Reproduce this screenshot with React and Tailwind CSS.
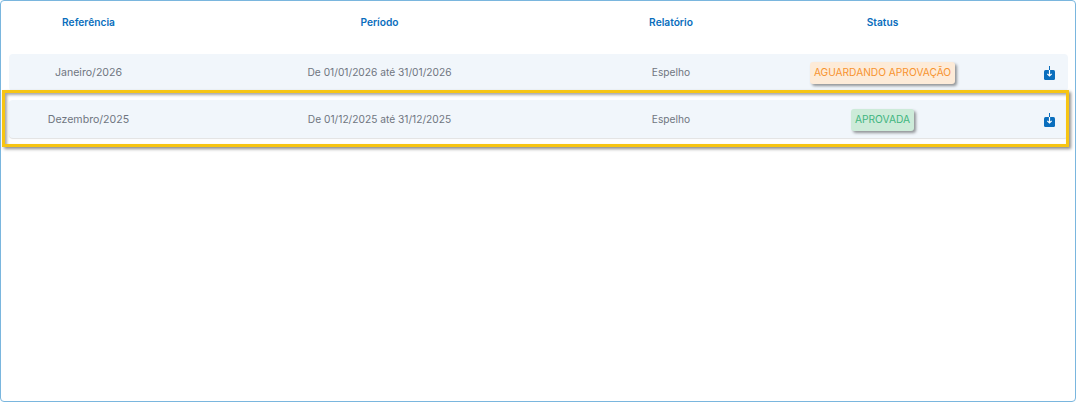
function DownloadIcon() {
  return (
    <svg width="11" height="14" viewBox="0 0 11 14" className="block">
      <rect x="0" y="4" width="11" height="10" rx="1.5" fill="#0a6ebd" />
      <path d="M5.5 0V4" fill="none" stroke="#0a6ebd" strokeWidth="1" />
      <path d="M5.5 4V10M3.3 7.8L5.5 10L7.7 7.8" fill="none" stroke="#fff" strokeWidth="1.2" />
    </svg>
  );
}

function Cells({ ref_, periodo, status, badge, shift }) {
  return (
    <div className={`grid grid-cols-[159px_423px_160px_263px_54px] items-center h-full text-[10.2px] text-[#6f7580] ${shift}`}>
      <div className="text-center text-[10.6px]">{ref_}</div>
      <div className="text-center">{periodo}</div>
      <div className="text-center">Espelho</div>
      <div className="flex justify-center">
        <span className={`rounded-[3px] px-[4px] h-[22px] flex items-center text-[10.2px] shadow-[2px_2px_3px_rgba(0,0,0,0.4)] ${badge}`}>{status}</span>
      </div>
      <div className="flex justify-end pr-[13px]"><DownloadIcon /></div>
    </div>
  );
}

export default function App() {
  return (
    <div className="w-[1076px] h-[402px] bg-white border border-[#7ab6de] rounded-[4px] overflow-hidden font-['Inter',sans-serif]">
      <div className="grid grid-cols-[159px_423px_160px_263px_54px] ml-[8px] mr-[7px] h-[53px] pb-[9px] items-center text-[10.2px] font-semibold text-[#0a6ebd] text-center">
        <div>Referência</div>
        <div>Período</div>
        <div>Relatório</div>
        <div>Status</div>
        <div />
      </div>
      <div className="ml-[8px] mr-[7px] flex flex-col gap-[9px]">
        <div className="h-[37px] bg-[#f1f6fb] rounded-[4px]">
          <Cells ref_="Janeiro/2026" periodo="De 01/01/2026 até 31/01/2026" status="AGUARDANDO APROVAÇÃO" badge="bg-[#fdebd8] text-[#f7932f]" />
        </div>
        <div className="relative h-[38px] bg-[#f1f6fb] rounded-[4px] shadow-[0_1px_1px_rgba(0,0,0,0.12)]">
          <Cells ref_="Dezembro/2025" periodo="De 01/12/2025 até 31/12/2025" status="APROVADA" badge="bg-[#cdebd9] text-[#3fb57f]" shift="pt-[1px]" />
          <div className="absolute left-[-7px] right-[-1px] top-[-10px] bottom-[-9px] border-[3px] border-[#f7c513] shadow-[2px_2px_3px_rgba(0,0,0,0.45),inset_2px_2px_3px_rgba(0,0,0,0.35)]" />
        </div>
      </div>
    </div>
  );
}
